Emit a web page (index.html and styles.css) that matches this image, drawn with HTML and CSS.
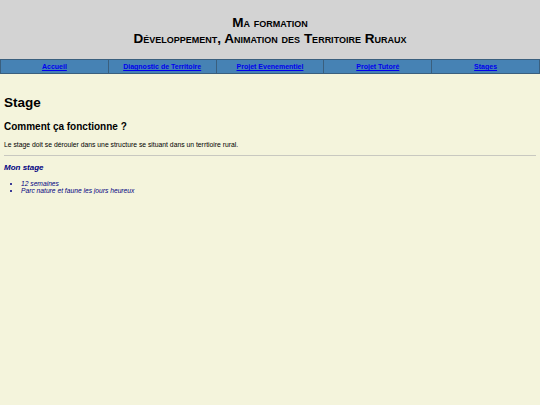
FILE: index.html
```html
<!DOCTYPE html>
<html lang="fr">
<head>
<meta charset="utf-8">
<title>Stage - Ma formation</title>
<link rel="stylesheet" href="styles.css">
</head>
<body>
<header class="banner">
  <h1 class="banner-title">Ma formation<br>Développement, Animation des Territoire Ruraux</h1>
</header>
<nav class="menu">
  <table class="menu-table">
    <tr>
      <td><a href="#">Accueil</a></td>
      <td><a href="#">Diagnostic de Territoire</a></td>
      <td><a href="#">Projet Evenementiel</a></td>
      <td><a href="#">Projet Tutoré</a></td>
      <td><a href="#">Stages</a></td>
    </tr>
  </table>
</nav>
<main class="content">
  <h2 class="page-title">Stage</h2>
  <h3 class="section-title">Comment ça fonctionne ?</h3>
  <p class="text">Le stage doit se dérouler dans une structure se situant dans un terrtioire rural.</p>
  <hr class="rule">
  <h4 class="sub-title">Mon stage</h4>
  <ul class="facts">
    <li>12 semaines</li>
    <li>Parc nature et faune les jours heureux</li>
  </ul>
</main>
</body>
</html>
```
FILE: styles.css
```css
html, body {
  margin: 0;
  padding: 0;
}
body {
  background: #f4f4dc;
  font-family: "Liberation Sans", Arial, sans-serif;
  color: #000;
}
.banner {
  background: #d3d3d3;
  height: 59px;
  display: flex;
  align-items: center;
  justify-content: center;
}
.banner-title {
  margin: 3px 0 0;
  font-size: 13.5px;
  line-height: 16px;
  font-variant: small-caps;
  font-weight: bold;
  text-align: center;
}
.menu {
  background: #d3d3d3;
}
.menu-table {
  width: 100%;
  border-collapse: collapse;
  table-layout: fixed;
}
.menu-table td {
  background: #4682b4;
  border: 1px solid #3a5f7e;
  height: 13px;
  padding: 0;
  text-align: center;
  font-size: 7px;
  line-height: 13px;
  font-weight: bold;
}
.menu-table a {
  color: #0000ee;
}
.content {
  padding: 0 4px;
}
.page-title {
  font-size: 13.5px;
  margin: 21px 0 0;
  line-height: 16px;
}
.section-title {
  font-size: 10px;
  margin: 10px 0 0;
  line-height: 12px;
}
.text {
  font-size: 6.8px;
  margin: 8px 0 0;
  line-height: 8px;
}
.rule {
  border: 0;
  border-top: 1px solid #c8c8c0;
  margin: 6px 0 0;
}
.sub-title {
  font-size: 8px;
  font-style: italic;
  color: #000080;
  margin: 7px 0 0;
  line-height: 10px;
}
.facts {
  margin: 7px 0 0;
  padding-left: 17px;
  font-size: 6.7px;
  line-height: 7px;
  font-style: italic;
  color: #000080;
}
```
